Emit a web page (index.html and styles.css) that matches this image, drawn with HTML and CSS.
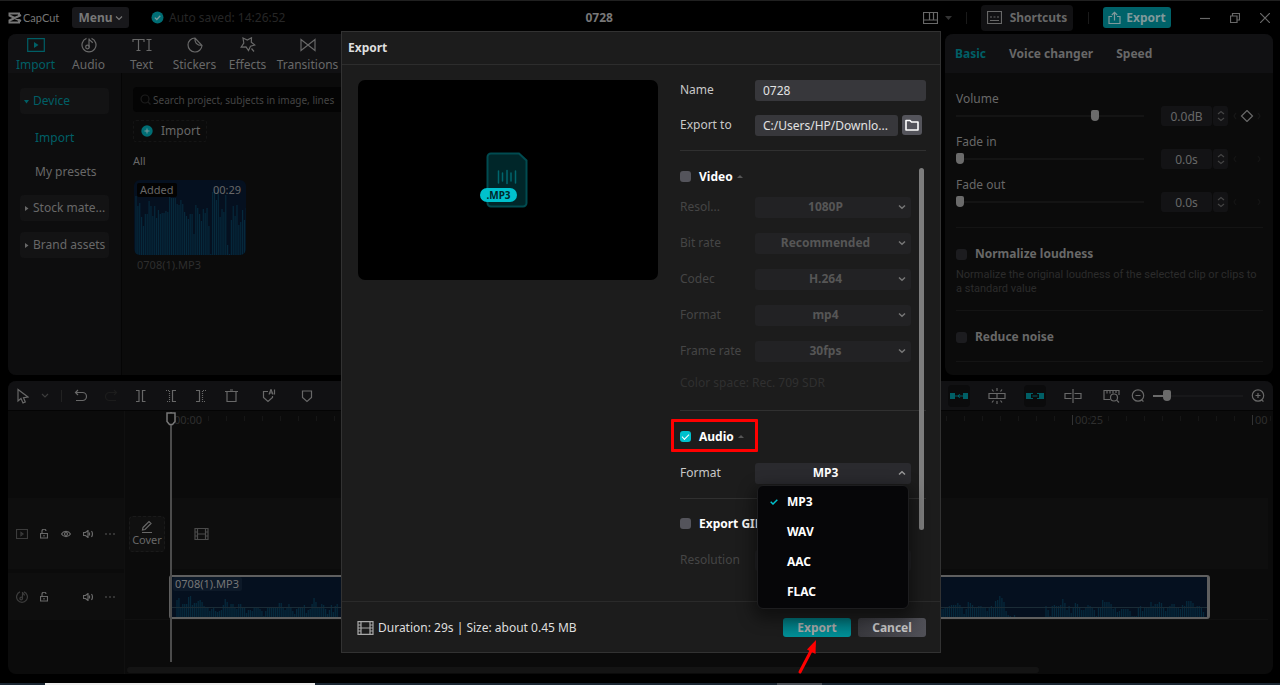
FILE: index.html
```html
<!DOCTYPE html>
<html lang="en">
<head>
<meta charset="utf-8">
<title>CapCut - 0728</title>
<link rel="stylesheet" href="styles.css">
</head>
<body>
<div class="app">
  <header class="topbar">
    <div class="topbar-left">
      <div class="brand">
        <svg width="14" height="12" viewBox="0 0 14 12" class="ico w2"><path d="M11 3.500V1.500H1.500V3.500L13 9M11 8.500V10.500H1.500V8.500L13 3"/></svg>
        <span>CapCut</span>
      </div>
      <button class="menu-btn">Menu<svg width="8" height="6" viewBox="0 0 8 6" class="ico"><path d="M1 1.500L4 4.500L7 1.500"/></svg></button>
      <div class="saved">
        <svg width="13" height="13" viewBox="0 0 13 13"><circle cx="6.500" cy="6.500" r="6" fill="#006d74"/><path d="M3.800 6.600L5.800 8.500L9.300 4.700" fill="none" stroke="#7a9a9c" stroke-width="1.300"/></svg>
        <span>Auto saved: 14:26:52</span>
      </div>
    </div>
    <h1 class="project">0728</h1>
    <div class="topbar-right">
      <button class="plain layout-btn" aria-label="Layout"><svg width="15" height="12" viewBox="0 0 15 12" class="ico"><path d="M.5.5H14.500V11.500H.5ZM.5 8H14.500M6.500.5V8M10.500.5V8"/></svg><svg width="8" height="4" viewBox="0 0 8 4"><path d="M0 0H7L3.500 4Z" fill="#333"/></svg></button>
      <i class="sep"></i>
      <button class="shortcuts"><svg width="15" height="13" viewBox="0 0 15 13" class="ico"><path d="M.5.5H14.500V12.500H.5ZM3 9.500H12M3 6H5M6.500 6H8.500M10 6H12"/></svg>Shortcuts</button>
      <i class="sep"></i>
      <button class="export-top"><svg width="13" height="14" viewBox="0 0 13 14" class="ico"><path d="M4 5.500H1V12.500H12V5.500H9M6.500 9.500V1.500M3.800 4L6.500 1.300L9.200 4"/></svg>Export</button>
      <div class="window-btns">
        <button class="plain" aria-label="Minimize"><svg width="10" height="10" viewBox="0 0 10 10" class="ico"><path d="M0 5.500H10"/></svg></button>
        <button class="plain" aria-label="Restore"><svg width="10" height="10" viewBox="0 0 10 10" class="ico"><path d="M.5 3H7V9.500H.5ZM2.500 3V.5H9.500V7H7"/></svg></button>
        <button class="plain" aria-label="Close"><svg width="10" height="10" viewBox="0 0 10 10" class="ico"><path d="M0 0L10 10M10 0L0 10"/></svg></button>
      </div>
    </div>
  </header>

  <main class="workspace">
    <section class="panel media">
      <nav class="tabs">
        <button class="tab on"><svg width="18" height="16" viewBox="0 0 18 16" class="ico"><path d="M.7 1.700H17.300V14.300H.7Z"/><path d="M7 5L11.500 8L7 11Z" fill="currentColor" stroke="none"/></svg>Import</button>
        <button class="tab"><svg width="16" height="16" viewBox="0 0 16 16" class="ico"><path d="M10.500 1.400A7 7 0 1 1 5.500 1.400M8 10.500V1.500C8 4 11 4 11.500 6"/><circle cx="6.500" cy="10" r="1.800"/></svg>Audio</button>
        <button class="tab"><svg width="20" height="16" viewBox="0 0 20 16" class="ico"><path d="M1 5V2.500H12V5M6.500 2.500V13.500M4.500 13.500H8.500M14.500 2.500H19.500M17 2.500V13.500M14.500 13.500H19.500"/></svg>Text</button>
        <button class="tab"><svg width="16" height="16" viewBox="0 0 16 16" class="ico"><path d="M8 1A7 7 0 1 0 15 8.500ZM8 1C7.500 5.500 9.500 8.500 15 8.500"/></svg>Stickers</button>
        <button class="tab"><svg width="16" height="16" viewBox="0 0 16 16" class="ico"><path d="M3 1L7.300 3L11.500.8L11.300 5.300L14.800 8L10.500 9.300L8.500 13.500L6 9.800L1.200 10L3.800 6ZM11.500 11.500L14 14.500"/></svg>Effects</button>
        <button class="tab wide"><svg width="16" height="16" viewBox="0 0 16 16" class="ico"><path d="M1 2.500V13.500L15 2.500V13.500Z"/></svg>Transitions</button>
      </nav>
      <div class="media-body">
        <aside class="side">
          <button class="side-head on"><svg width="5" height="5" viewBox="0 0 5 5"><path d="M0 1H5L2.500 4.500Z" fill="currentColor"/></svg>Device</button>
          <button class="side-item on">Import</button>
          <button class="side-item">My presets</button>
          <button class="side-head"><svg width="5" height="5" viewBox="0 0 5 5"><path d="M1 0V5L4.500 2.500Z" fill="currentColor"/></svg>Stock mate...</button>
          <button class="side-head"><svg width="5" height="5" viewBox="0 0 5 5"><path d="M1 0V5L4.500 2.500Z" fill="currentColor"/></svg>Brand assets</button>
        </aside>
        <div class="library">
          <label class="search"><svg width="11" height="11" viewBox="0 0 11 11" class="ico"><circle cx="5" cy="5" r="4"/><path d="M8 8L10.500 10.500"/></svg><input type="text" aria-label="Search" placeholder="Search project, subjects in image, lines"></label>
          <button class="import-btn"><svg width="12" height="12" viewBox="0 0 12 12"><circle cx="6" cy="6" r="5.700" fill="#006d74"/><path d="M6 3.500V8.500M3.500 6H8.500" stroke="#7a9a9c"/></svg>Import</button>
          <p class="all">All</p>
          <figure class="clip-card">
            <div class="thumb"><svg id="thumb-wave" viewBox="0 0 112 75" width="112" height="75"></svg><span class="added">Added</span><span class="length">00:29</span></div>
            <figcaption>0708(1).MP3</figcaption>
          </figure>
        </div>
      </div>
    </section>

    <section class="panel props">
      <nav class="prop-tabs"><button class="on">Basic</button><button>Voice changer</button><button>Speed</button></nav>
      <div class="props-body">
        <div class="slider-field">
          <label for="vol">Volume</label>
          <div class="slider-row"><input id="vol" type="range" min="0" max="100" value="75"><input class="num" type="text" aria-label="Volume value" value="0.0dB"><button class="spin" aria-label="Step volume"><svg width="8" height="12" viewBox="0 0 8 12" class="ico"><path d="M1 4L4 1.500L7 4M1 8L4 10.500L7 8"/></svg></button><button class="plain key" aria-label="Keyframe"><svg width="28" height="12" viewBox="0 0 28 12" class="ico"><path d="M14 .5L19.500 6L14 11.500L8.500 6Z"/><path d="M3 3L1 6L3 9M25 3L27 6L25 9" stroke="#181818"/></svg></button></div>
        </div>
        <div class="slider-field">
          <label for="fin">Fade in</label>
          <div class="slider-row"><input id="fin" type="range" min="0" max="100" value="0"><input class="num" type="text" aria-label="Fade in value" value="0.0s"><button class="spin" aria-label="Step fade in"><svg width="8" height="12" viewBox="0 0 8 12" class="ico"><path d="M1 4L4 1.500L7 4M1 8L4 10.500L7 8"/></svg></button><span class="key"><svg width="28" height="12" viewBox="0 0 28 12" class="ico"><path d="M3 3L1 6L3 9M25 3L27 6L25 9" stroke="#151515"/></svg></span></div>
        </div>
        <div class="slider-field">
          <label for="fout">Fade out</label>
          <div class="slider-row"><input id="fout" type="range" min="0" max="100" value="0"><input class="num" type="text" aria-label="Fade out value" value="0.0s"><button class="spin" aria-label="Step fade out"><svg width="8" height="12" viewBox="0 0 8 12" class="ico"><path d="M1 4L4 1.500L7 4M1 8L4 10.500L7 8"/></svg></button><span class="key"><svg width="28" height="12" viewBox="0 0 28 12" class="ico"><path d="M3 3L1 6L3 9M25 3L27 6L25 9" stroke="#151515"/></svg></span></div>
        </div>
        <div class="option">
          <label class="check"><input type="checkbox">Normalize loudness</label>
          <p>Normalize the original loudness of the selected clip or clips to a standard value</p>
        </div>
        <div class="option last"><label class="check"><input type="checkbox">Reduce noise</label></div>
      </div>
    </section>
  </main>

  <section class="panel timeline">
    <div class="tools">
      <div class="tools-left">
        <button class="plain"  aria-label="Select"><svg width="12" height="16" viewBox="0 0 12 16" class="ico"><path d="M1 1.500V13L4 10.500L6 15L8.300 14L6.500 9.700L11 9Z"/></svg></button>
        <button class="plain narrow" aria-label="Select mode"><svg width="8" height="6" viewBox="0 0 8 6" class="ico dim"><path d="M1 1L4 4L7 1"/></svg></button>
        <i class="sep"></i>
        <button class="plain" aria-label="Undo"><svg width="14" height="14" viewBox="0 0 14 14" class="ico"><path d="M4 1L1.500 3.500L4 6M1.500 3.500H8.500A4 4 0 0 1 8.500 11.500H2"/></svg></button>
        <button class="plain" aria-label="Redo"><svg width="14" height="14" viewBox="0 0 14 14" class="ico faint"><path d="M10 1L12.500 3.500L10 6M12.500 3.500H5.500A4 4 0 0 0 5.500 11.500H12"/></svg></button>
        <button class="plain" aria-label="Split"><svg width="12" height="14" viewBox="0 0 12 14" class="ico"><path d="M1 1.500H4V12.500H1M10.500 1.500H7.500V12.500H10.500"/></svg></button>
        <button class="plain" aria-label="Delete left"><svg width="12" height="14" viewBox="0 0 12 14" class="ico"><path d="M11 1.500H7.500V12.500H11"/><path d="M1 1.500H4.500V12.500H1" stroke-dasharray="1 1"/></svg></button>
        <button class="plain" aria-label="Delete right"><svg width="12" height="14" viewBox="0 0 12 14" class="ico"><path d="M1 1.500H4.500V12.500H1"/><path d="M11 1.500H7.500V12.500H11" stroke-dasharray="1 1"/></svg></button>
        <button class="plain" aria-label="Delete"><svg width="13" height="14" viewBox="0 0 13 14" class="ico"><path d="M0 2.500H13M2 2.500V12.500H11V2.500M5 1H8"/></svg></button>
        <button class="plain marker ai" aria-label="AI marker"><svg width="14" height="14" viewBox="0 0 14 14" class="ico"><path d="M6 2.500H1.500V8.500L6 12.500L10.500 8.500V7M7 5.500L9 .5L11 5.500M7.800 4H10.200M12.500.5V5.500"/></svg></button>
        <button class="plain marker" aria-label="Marker"><svg width="12" height="14" viewBox="0 0 12 14" class="ico"><path d="M1.500 2H10.500V8.500L6 12.500L1.500 8.500Z"/></svg></button>
      </div>
      <div class="tools-right">
        <button class="plain pill" aria-label="Main track magnet"><svg width="18" height="8" viewBox="0 0 18 8" class="ico teal"><path d="M0 1H5V7H0ZM13 1H18V7H13Z" fill="currentColor" stroke="none"/><path d="M5 4H8L10 2.500M8 4L10 5.500M10 4H13"/></svg></button>
        <button class="plain" aria-label="Auto snap"><svg width="18" height="16" viewBox="0 0 18 16" class="ico"><path d="M1 5.500H17V10.500H1ZM9 5.500V10.500M9 0V3M9 13V16M4 1.500L5.500 3.500M14 1.500L12.500 3.500M4 14.500L5.500 12.500M14 14.500L12.500 12.500"/></svg></button>
        <button class="plain pill" aria-label="Linkage"><svg width="18" height="8" viewBox="0 0 18 8" class="ico teal"><path d="M0 1H5V7H0ZM13 1H18V7H13Z" fill="currentColor" stroke="none"/><path d="M5 1.500H7M5 6.500H7M13 1.500H11M13 6.500H11M6.500 4H11.500"/></svg></button>
        <button class="plain" aria-label="Preview axis"><svg width="18" height="14" viewBox="0 0 18 14" class="ico"><path d="M7.500 4.500H1V9.500H7.500M10.500 4.500H17V9.500H10.500M9 0V14"/></svg></button>
        <button class="plain fit" aria-label="Fit timeline"><svg width="17" height="14" viewBox="0 0 17 14" class="ico"><path d="M7 10.500H1V1.500H16V6M4 2V4.500M7 2V4.500M10 2V4.500M13 2V4M14 11.500L16 13.500"/><circle cx="11" cy="8.500" r="3.500"/></svg></button>
        <button class="plain zoom" aria-label="Zoom out"><svg width="14" height="14" viewBox="0 0 14 14" class="ico"><circle cx="7" cy="6.500" r="5.700"/><path d="M4.500 6.500H9.500M10.500 11L12.500 12.500"/></svg></button>
        <input class="zoom-range" type="range" aria-label="Timeline zoom" min="0" max="100" value="12">
        <button class="plain zoom" aria-label="Zoom in"><svg width="14" height="14" viewBox="0 0 14 14" class="ico"><circle cx="7" cy="6.500" r="5.700"/><path d="M4.500 6.500H9.500M7 4V9M10.500 11L12.500 12.500"/></svg></button>
      </div>
    </div>
    <div class="tl-body">
      <div class="heads">
        <div class="head video">
          <svg width="12" height="10" viewBox="0 0 12 10" class="ico dim"><path d="M.5.5H11.500V9.500H.5ZM5 3.500L7 5L5 6.500Z"/></svg>
          <svg width="8" height="10" viewBox="0 0 8 10" class="ico"><path d="M.5 4.500H7.500V9H.5ZM2 4.500V2.500A2 2 0 0 1 6 2M4 6V7.500"/></svg>
          <svg width="10" height="8" viewBox="0 0 10 8" class="ico"><path d="M.5 4C2.500.5 7.500.5 9.500 4C7.500 7.500 2.500 7.500.5 4Z"/><circle cx="5" cy="4" r="1.500"/></svg>
          <svg width="10" height="8" viewBox="0 0 10 8" class="ico"><path d="M.5 2.500H2.500L5 .5V7.500L2.500 5.500H.5ZM6.500 2.500V5.500M8.500 1C9.800 3 9.800 5 8.500 7"/></svg>
          <svg width="10" height="2" viewBox="0 0 10 2"><path d="M0 0H2V2H0ZM4 0H6V2H4ZM8 0H10V2H8Z" fill="#333"/></svg>
        </div>
        <div class="head audio">
          <svg width="12" height="12" viewBox="0 0 12 12" class="ico dim"><path d="M8 .9A5.400 5.400 0 1 1 4 .9M6.500 7.500V1C6.500 3 8.500 3 8.500 4.500"/><circle cx="5.200" cy="7.500" r="1.300"/></svg>
          <svg width="8" height="10" viewBox="0 0 8 10" class="ico"><path d="M.5 4.500H7.500V9H.5ZM2 4.500V2.500A2 2 0 0 1 6 2M4 6V7.500"/></svg>
          <i></i>
          <svg width="10" height="8" viewBox="0 0 10 8" class="ico"><path d="M.5 2.500H2.500L5 .5V7.500L2.500 5.500H.5ZM6.500 2.500V5.500M8.500 1C9.800 3 9.800 5 8.500 7"/></svg>
          <svg width="10" height="2" viewBox="0 0 10 2"><path d="M0 0H2V2H0ZM4 0H6V2H4ZM8 0H10V2H8Z" fill="#333"/></svg>
        </div>
      </div>
      <div class="lanes">
        <div class="ruler"><span class="first">00:00</span><span class="skip"></span><span>00:25</span><span class="end">00</span></div>
        <div class="lane video">
          <button class="cover"><svg width="12" height="13" viewBox="0 0 12 13" class="ico"><path d="M2 7.500L8 1.500L10 3.500L4 9.500L1.500 10ZM1 12.500H11"/></svg>Cover</button>
          <svg width="15" height="12" viewBox="0 0 15 12" class="ico film"><path d="M1 .5H14V11.500H1ZM3.500.5V11.500M11.500.5V11.500M3.500 6H11.500M1 4H3.500M1 8H3.500M11.500 4H14M11.500 8H14"/></svg>
        </div>
        <div class="lane audio">
          <div class="clip"><svg id="clip-wave" width="1035" height="24" viewBox="0 0 1035 24"></svg><span>0708(1).MP3</span></div>
        </div>
        <div class="hscroll"></div>
        <div class="playhead"><svg width="10" height="14" viewBox="0 0 10 14"><path d="M1 1H9V9.500L6.500 12.500H3.500L1 9.500Z" fill="#0b0b0b" stroke="#777" stroke-width="1.500"/></svg></div>
      </div>
    </div>
  </section>
  <footer class="taskbar"><i class="white"></i><i class="grey"></i></footer>
</div>

<div class="backdrop">
  <div class="dialog" role="dialog" aria-labelledby="dlg-title">
    <header class="dlg-head"><h2 id="dlg-title">Export</h2></header>
    <div class="dlg-body">
      <div class="preview">
        <svg width="50" height="56" viewBox="0 0 50 56"><path d="M12 1.500H40L47.500 8.500V51A3.500 3.500 0 0 1 44 54.500H12A3.500 3.500 0 0 1 8.500 51V5A3.500 3.500 0 0 1 12 1.500Z" fill="#002629" stroke="#004b50" stroke-width="2"/><path d="M19.500 19V31M23.500 21V29M28 18.500V31.500M32 21V29M36.500 19V31" stroke="#00666d" stroke-width="1.500" stroke-linecap="round"/></svg>
        <span class="badge">.MP3</span>
      </div>
      <form class="form">
        <div class="field"><label for="name">Name</label><input id="name" class="text" type="text" value="0728"></div>
        <div class="field path"><label for="path">Export to</label><input id="path" class="text" type="text" value="C:/Users/HP/Downlo..."><button type="button" class="folder" aria-label="Browse"><svg width="14" height="12" viewBox="0 0 14 12"><path d="M1 1.500H5L6.500 3H13V11H1Z" fill="none" stroke="#fff" stroke-width="1.600" stroke-linejoin="round"/></svg></button></div>
        <div class="scroll">
          <div class="group">
            <label class="check bright"><input type="checkbox">Video<svg width="6" height="3" viewBox="0 0 6 3"><path d="M0 3L3 0L6 3Z" fill="#555"/></svg></label>
            <div class="field off"><label for="res">Resol...</label><div class="pick"><select id="res" disabled><option>1080P</option></select><svg width="8" height="6" viewBox="0 0 8 6"><path d="M1 1.500L4 4.200L7 1.500"/></svg></div></div>
            <div class="field off"><label for="bit">Bit rate</label><div class="pick"><select id="bit" disabled><option>Recommended</option></select><svg width="8" height="6" viewBox="0 0 8 6"><path d="M1 1.500L4 4.200L7 1.500"/></svg></div></div>
            <div class="field off"><label for="codec">Codec</label><div class="pick"><select id="codec" disabled><option>H.264</option></select><svg width="8" height="6" viewBox="0 0 8 6"><path d="M1 1.500L4 4.200L7 1.500"/></svg></div></div>
            <div class="field off"><label for="vfmt">Format</label><div class="pick"><select id="vfmt" disabled><option>mp4</option></select><svg width="8" height="6" viewBox="0 0 8 6"><path d="M1 1.500L4 4.200L7 1.500"/></svg></div></div>
            <div class="field off"><label for="fps">Frame rate</label><div class="pick"><select id="fps" disabled><option>30fps</option></select><svg width="8" height="6" viewBox="0 0 8 6"><path d="M1 1.500L4 4.200L7 1.500"/></svg></div></div>
            <p class="space">Color space: Rec. 709 SDR</p>
          </div>
          <div class="group">
            <label class="check bright marked"><input type="checkbox" checked>Audio<svg width="6" height="3" viewBox="0 0 6 3"><path d="M0 3L3 0L6 3Z" fill="#555"/></svg></label>
            <div class="field"><label for="afmt">Format</label><div class="pick open"><select id="afmt"><option>MP3</option></select><svg width="8" height="6" viewBox="0 0 8 6"><path d="M1 4.500L4 1.800L7 4.500"/></svg>
              <ul class="options" role="listbox"><li role="option" aria-selected="true"><svg width="8" height="6" viewBox="0 0 8 6"><path d="M.7 2.800L3 5L7.300.8" fill="none" stroke="#00c1cd" stroke-width="1.500"/></svg>MP3</li><li role="option">WAV</li><li role="option">AAC</li><li role="option">FLAC</li></ul></div></div>
          </div>
          <div class="group">
            <label class="check bright"><input type="checkbox">Export GIF</label>
            <div class="field off"><label for="gif">Resolution</label><div class="pick"><select id="gif" disabled></select></div></div>
          </div>
          <div class="thumbbar"></div>
        </div>
      </form>
    </div>
    <footer class="dlg-foot">
      <svg width="17" height="14" viewBox="0 0 17 14" class="ico light"><path d="M1 .7H16V13.300H1ZM4 .7V13.300M13 .7V13.300M4 7H13M1 4H4M1 7H4M1 10H4M13 4H16M13 7H16M13 10H16"/></svg>
      <p>Duration: 29s | Size: about 0.45 MB</p>
      <button class="primary">Export<svg class="arrow" width="22" height="36" viewBox="0 0 22 36"><path d="M3 33L15 10" stroke="#f00" stroke-width="3" stroke-linecap="round"/><path d="M19 1L18.500 15L10 10.500Z" fill="#f00"/></svg></button>
      <button class="cancel">Cancel</button>
    </footer>
  </div>
</div>
<script src="waves.js"></script>
</body>
</html>
```
FILE: waves.js
```js
// Bar heights, in pixels, of the sound level drawn in the clips.
const thumb = [59,49,52,38,29,41,41,54,49,39,49,37,45,41,42,42,44,43,60,57,57,57,51,50,55,51,43,39,36,41,41,21,50,47,41,34,46,42,47,29,1,63,66,55,66,38,46,43,60,10,1,35,49,39,50,30,33,45,35,47];
const start = [17,19,10,13,13,13,20,21,12,14,14,16,17,15,11,10,9,6,8,10,6,5,6,7,12,18,15,10,13,13,9,8,13,13,9,9,4,7,7,6,9,9,9,8,6,1,6,10,9,9,10,9,9,14,14,10,7,9,13,9,6,3,8,9,9,9,12,4,7,8,13,19,15,9,9,13,12,8,3,7,12,5,11,13];
const end = [8,8,9,9,11,12,12,12,14,12,9,3,8,15,14,12,10,9,11,11,9,9,6,9,11,10,16,17,21,19,15,6,2,1,0,2,0,0,0,0,0,0,0,0,0,0,0,0,0,0,11,7,1,11,12,11,11,12,18,14,7,11,4,9,14,13,10,7,7,9,12,11,10,7,1,10,10,17,15,15,15,13,8,10,5,6,8,8,8,8,6,1,1,1,10,11,6,10,9,10,15,11,13,13,15,14,9,6,9,11,13,13,9,10,8,12,11,16,16,16,14,10,11,11,10,5];

function draw(id, bars, from, pitch, base, width) {
  const d = bars.map((h, i) => h ? `M${(from + i * pitch).toFixed(2)} ${base}v-${h}` : '').join('');
  document.getElementById(id).insertAdjacentHTML('beforeend', `<path d="${d}" stroke-width="${width}"/>`);
}

draw('thumb-wave', thumb, 2, 1.87, 75, 1.2);
draw('clip-wave', start, 5, 1.93, 24, 1.3);
draw('clip-wave', end, 769, 2.1, 24, 1.3);
```
FILE: styles.css
```css
* { box-sizing: border-box; margin: 0; padding: 0; }
html, body { height: 100%; }
body { background: #000; color: #686868; font: 12px/16px "Noto Sans", "Open Sans", sans-serif; overflow: hidden; }
button, input, select { font: inherit; color: inherit; border: 0; background: none; outline: 0; }
button { white-space: nowrap; }
svg { display: block; flex: none; }
ul { list-style: none; }

.ico { fill: none; stroke: currentColor; stroke-width: 1.2; }
.ico.w2 { stroke-width: 2; }
.ico.dim { color: #3c3c3c; }
.ico.faint { color: #1c1c1c; }
.ico.teal { color: #005f66; }
.ico.light { color: #a8a8a8; }
.plain { display: flex; align-items: center; justify-content: center; }
.panel { background: #0b0b0b; border-radius: 8px; overflow: hidden; min-width: 0; }
.sep { width: 1px; height: 12px; background: #1a1a1a; }

.app { display: flex; flex-direction: column; height: 100vh; border-top: 1px solid #202020; }

.topbar { display: flex; justify-content: space-between; align-items: center; height: 33px; padding: 0 10px 0 8px; flex: none; }
.topbar-left, .topbar-right, .brand, .saved { display: flex; align-items: center; }
.brand { gap: 1px; width: 64px; font: 11px/14px "Lato", sans-serif; color: #777; }
.menu-btn { display: flex; align-items: center; justify-content: center; gap: 2px; width: 57px; height: 21px; border-radius: 3px; background: #18181b; font-weight: 700; color: #777; }
.saved { gap: 5px; margin-left: 22px; color: #262626; }
.project { margin-right: 10px; font-size: 12px; color: #777; }
.layout-btn { gap: 7px; margin-right: 13px; }
.shortcuts { display: flex; align-items: center; justify-content: center; gap: 8px; width: 92px; height: 26px; margin: 0 15px 0 14px; border-radius: 4px; background: #111113; font-weight: 700; }
.export-top { display: flex; align-items: center; justify-content: center; gap: 5px; width: 68px; height: 21px; margin-left: 14px; border-radius: 3px; background: #006269; color: #80999b; font-weight: 700; }
.window-btns { display: flex; gap: 20px; margin-left: 29px; }

.workspace { display: flex; gap: 6px; height: 341px; padding: 0 7px 0 8px; flex: none; }
.media { flex: 1; display: flex; flex-direction: column; }
.tabs { display: flex; height: 39px; padding: 3px 0 0 1px; background: #111113; }
.tab { display: flex; flex-direction: column; align-items: center; gap: 4px; width: 53px; }
.tab.wide { width: 67px; }
.on { color: #005f66; }
.media-body { display: flex; flex: 1; }
.side { display: flex; flex-direction: column; width: 114px; padding: 15px 12px; background: #0d0d0e; border-right: 1px solid #050505; }
.side-head { display: flex; align-items: center; gap: 4px; height: 26px; padding-left: 4px; margin-bottom: 11px; border-radius: 4px; background: #131314; }
.side-item { height: 26px; margin-bottom: 8px; padding-left: 15px; text-align: left; }
.side-item + .side-head { margin-top: 2px; }
.library { flex: 1; padding: 14px 0 0 11px; }
.search { display: flex; align-items: center; gap: 2px; height: 25px; padding-left: 7px; border-radius: 4px; background: #040404; color: #1c1c1c; font-size: 10px; }
.search input { flex: 1; min-width: 0; }
.search input::placeholder { color: #444; }
.import-btn { display: flex; align-items: center; gap: 8px; width: 74px; height: 22px; margin-top: 8px; padding-left: 7px; border: 1px dashed #151515; border-radius: 3px; }
.all { margin-top: 11px; font-size: 11px; }
.clip-card { width: 112px; margin-top: 11px; margin-left: 1px; }
.thumb { position: relative; height: 75px; border-radius: 6px; background: #05101f; overflow: hidden; }
#thumb-wave, #clip-wave { stroke: #06293c; }
.added, .length { position: absolute; top: 3px; font-size: 11px; line-height: 14px; }
.added { left: 3px; padding: 0 3px; border-radius: 2px; background: #030303; }
.length { right: 5px; }
.clip-card figcaption { padding: 2px 3px; font-size: 11px; color: #2e2e2e; }

.props { width: 328px; flex: none; }
.prop-tabs { display: flex; gap: 23px; height: 39px; padding-left: 10px; background: #111113; font-weight: 700; }
.prop-tabs button { font-weight: 700; }
.props-body { padding: 17px 10px 0 11px; }
.slider-field { margin-bottom: 7px; }
.slider-field label { display: block; height: 16px; line-height: 18px; }
.slider-row { display: flex; align-items: center; height: 20px; }
input[type=range] { appearance: none; width: 188px; height: 12px; }
input[type=range]::-webkit-slider-runnable-track { height: 2px; background: #141414; }
input[type=range]::-webkit-slider-thumb { appearance: none; width: 8px; height: 11px; margin-top: -5px; border-radius: 2px 2px 4px 4px; background: #6b6b6b; }
.num { width: 51px; height: 20px; margin-left: 17px; border-radius: 3px; background: #131315; text-align: center; }
.spin { display: flex; align-items: center; justify-content: center; width: 15px; height: 20px; margin-left: 1px; border-radius: 3px; background: #131315; color: #444; }
.key { margin-left: 5px; }
.option { margin-top: 15px; padding: 18px 0 14px; border-top: 1px solid #141414; }
.option p { margin-top: 6px; font: 11px/14px Roboto, "Noto Sans", sans-serif; color: #2c2c2c; }
.option.last { margin-top: 0; padding: 18px 0 16px; border-bottom: 1px solid #141414; }
.check { display: flex; align-items: center; font-weight: 700; color: #686868; }
.check input { appearance: none; width: 11px; height: 11px; margin-right: 8px; border-radius: 3px; background: #1c1c1f; }

.timeline { display: flex; flex-direction: column; flex: 1; margin: 6px 7px 9px 8px; }
.tools { display: flex; justify-content: space-between; height: 30px; background: #111113; border-bottom: 1px solid #040404; }
.tools-left, .tools-right { display: flex; align-items: center; }
.tools-left .plain { width: 30px; }
.tools-left .plain.narrow { width: 14px; margin-right: 9px; }
.tools-left .sep { margin-right: 4px; background: #222; }
.tools-left .plain.marker { width: 38px; }
.tools-left .plain.ai { margin-left: 4px; }
.tools-right { padding-right: 8px; }
.tools-right .plain { width: 22px; height: 22px; margin-right: 16px; }
.tools-right .plain.fit { margin-right: 9px; }
.tools-right .plain.zoom { width: 14px; margin-right: 8px; }
.tools-right .plain.zoom:last-child { margin: 0 0 0 8px; }
.tools-right .pill { border-radius: 4px; background: #0b0b0c; }
.zoom-range.zoom-range { width: 90px; }
.zoom-range.zoom-range::-webkit-slider-runnable-track { background: linear-gradient(90deg, #6b6b6b 12px, #18181a 12px); }
.tl-body { display: flex; flex: 1; }
.heads { width: 117px; padding-top: 87px; border-right: 1px solid #101010; }
.head { display: grid; grid-template-columns: repeat(5, 22px); align-items: center; justify-items: center; padding-left: 3px; background: #0e0e0e; }
.head.video, .lane.video { height: 71px; margin-bottom: 4px; }
.head.audio, .lane.audio { height: 47px; }
.lanes { position: relative; display: flex; flex-direction: column; flex: 1; min-width: 0; }
.ruler { display: flex; height: 87px; margin-left: 47px; padding-top: 1px; font-size: 11px; color: #2e2e2e; background: repeating-linear-gradient(90deg, #161616 0 1px, transparent 1px 18px) 0 5px / 100% 5px no-repeat; }
.ruler span { flex: none; width: 180px; padding-left: 2px; }
.ruler span + span:not(.skip) { border-left: 1px solid #333; height: 10px; line-height: 10px; margin-top: 3px; }
.ruler span.skip { width: 720px; }
.ruler span.end { width: auto; }
.lane { margin-right: 5px; }
.lane.video { display: flex; align-items: center; padding-left: 4px; background: linear-gradient(90deg, #0b0b0b 47px, #0e0e0e 47px); }
.cover { display: flex; flex-direction: column; align-items: center; justify-content: center; width: 36px; height: 36px; border: 1px dashed #1a1a1a; border-radius: 4px; background: #101010; font-size: 11px; line-height: 14px; }
.film { margin-left: 29px; color: #4a4a4a; }
.lane.audio { padding: 2px 0 0 44px; border-bottom: 1px solid #101010; }
.clip { position: relative; display: flex; flex-direction: column; justify-content: flex-end; width: 1041px; height: 44px; border: 2px solid #5f5f5f; border-width: 2px 3px; border-radius: 3px; background: #05101f; }
.clip::after { content: ""; position: absolute; inset: 30px 0 auto; height: 1px; background: #1b2c36; }
.clip span { position: absolute; top: 0; left: 1px; padding: 0 3px 0 2px; border-radius: 2px; background: #0d1928; font-size: 11px; line-height: 14px; color: #767676; }
.hscroll { width: 912px; height: 6px; margin: auto 0 1px 2px; border-radius: 3px; background: #141414; }
.playhead { position: absolute; top: 1px; left: 41px; width: 10px; height: 250px; background: linear-gradient(#4c4c4c, #4c4c4c) center / 2px 100% no-repeat; }
.taskbar { display: flex; height: 2px; padding-left: 45px; background: #1b2733; flex: none; }
.taskbar .white { width: 270px; background: #eee; }
.taskbar .grey { width: 45px; margin-left: 462px; background: #4a5058; }

.backdrop { position: absolute; inset: 0; display: grid; place-items: center; padding: 0 0 2px 2px; }
.dialog { display: flex; flex-direction: column; width: 600px; height: 622px; border: 1px solid #323232; background: #1c1c1c; color: #c8c8c8; }
.dlg-head { display: flex; align-items: center; height: 33px; padding-left: 6px; border-bottom: 1px solid #2d2d2d; }
.dlg-head h2 { font-size: 12px; color: #dedede; }
.dlg-body { display: flex; flex: 1; gap: 22px; padding: 15px 14px 0 16px; min-height: 0; }
.preview { position: relative; display: grid; place-items: center; flex: none; width: 300px; height: 200px; padding-right: 8px; border-radius: 7px; background: #000; }
.badge { position: absolute; left: 122px; top: 108px; width: 37px; height: 14px; border-radius: 7px; background: #00c1cd; color: #00282b; text-align: center; font-size: 10px; line-height: 14px; font-weight: 700; }
.form { display: flex; flex-direction: column; flex: 1; min-width: 0; }
.field { display: flex; align-items: center; height: 21px; }
.field > label { width: 75px; flex: none; }
.text { flex: 1; min-width: 0; height: 21px; padding: 0 8px; border-radius: 3px; background: #37373b; color: #e2e2e2; }
.field.path { margin-top: 14px; padding-right: 4px; }
.folder { display: grid; place-items: center; width: 20px; height: 20px; margin-left: 4px; border-radius: 3px; background: #54545b; }
.scroll { position: relative; margin-top: 14px; }
.group { display: flex; flex-direction: column; gap: 15px; border-top: 1px solid #303030; }
.group .field { padding-right: 15px; }
.check.bright { color: #fff; height: 16px; align-self: flex-start; }
.check.bright input { background: #54545b; }
.check.bright svg { margin-left: 4px; }
.check.bright input:checked { background: #00c1cd; }
.group:first-child { padding: 18px 0 19px; }
.group:first-child .check { margin-bottom: -3px; }
.group:nth-child(2) { padding: 18px 0 14px; gap: 18px; }
.group:nth-child(3) { padding-top: 17px; gap: 18px; }
.off { color: #454545; }
.space { margin-top: -2px; color: #303030; }
.pick { position: relative; display: grid; flex: 1; align-items: center; border-radius: 3px; background: #222224; }
.pick select { grid-area: 1 / 1; appearance: none; width: 100%; height: 21px; padding-right: 15px; font-weight: 700; text-align-last: center; opacity: 1; color: #565656; }
.pick > svg { grid-area: 1 / 1; justify-self: end; margin-right: 5px; fill: none; stroke: #777; stroke-width: 1.5; pointer-events: none; }
.pick.open { background: #2a2a2e; }
.pick.open select { color: #fff; }
.pick.open > svg { stroke: #999; }
.options { position: absolute; top: 22px; left: 2px; right: 2px; z-index: 2; padding: 1px 0; border: 1px solid #1d1d1f; border-radius: 6px; background: #060608; box-shadow: 0 6px 16px 4px rgba(0, 0, 0, .45); color: #fff; font-weight: 700; }
.options li { position: relative; height: 30px; padding-left: 29px; line-height: 30px; }
.options svg { position: absolute; left: 12px; top: 12px; }
.marked { position: relative; }
.marked::before { content: ""; position: absolute; inset: -10px -14px -7px -9px; border: 3px solid #f00; border-radius: 1px; }
.marked input:checked { display: grid; place-items: center; }
.marked input:checked::after { content: ""; width: 6px; height: 3px; margin-bottom: 2px; border: solid #fff; border-width: 0 0 1px 1px; transform: rotate(-45deg); }
.thumbbar { position: absolute; right: 2px; top: 18px; width: 5px; height: 362px; border-radius: 3px; background: #7d7d7d; }
.dlg-foot { display: flex; align-items: center; height: 51px; padding: 2px 14px 0 15px; border-top: 1px solid #2a2a2a; color: #dedede; flex: none; }
.dlg-foot p { flex: 1; margin-left: 4px; }
.dlg-foot button { width: 68px; height: 19px; border-radius: 3px; font-weight: 700; line-height: 19px; }
.primary { position: relative; background: linear-gradient(#007177, #008f97); color: #a5a5a5; }
.cancel { margin-left: 7px; background: linear-gradient(90deg, #38383d, #505057); color: #c4c4c4; }
.arrow { position: absolute; left: 14px; top: 21px; }
```
